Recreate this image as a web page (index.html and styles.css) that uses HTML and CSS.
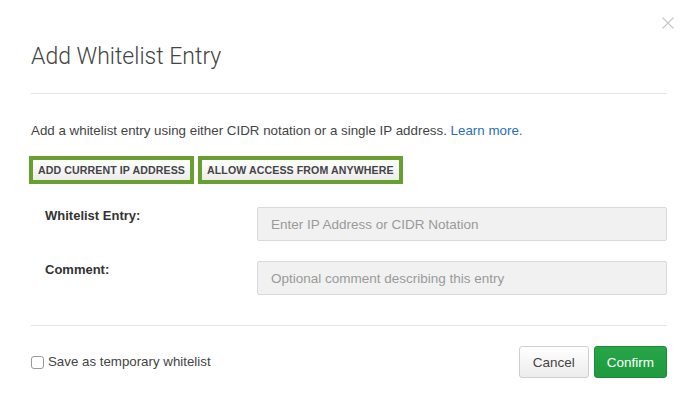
FILE: index.html
```html
<!DOCTYPE html>
<html>
<head>
<meta charset="utf-8">
<link rel="stylesheet" href="styles.css">
</head>
<body>
<div class="modal">
  <button class="close" aria-label="Close">
    <svg width="12" height="12" viewBox="0 0 12 12"><path d="M0.5 0.5 L11.5 11.5 M11.5 0.5 L0.5 11.5" stroke="#c8c8c8" stroke-width="1.2" fill="none"/></svg>
  </button>
  <div class="header">
    <h1 class="title">Add Whitelist Entry</h1>
  </div>
  <div class="body">
    <p class="desc">Add a whitelist entry using either CIDR notation or a single IP address. <a href="#" class="link">Learn more.</a></p>
    <div class="quick">
      <div class="hl"><button class="btn-sm">ADD CURRENT IP ADDRESS</button></div>
      <div class="hl"><button class="btn-sm">ALLOW ACCESS FROM ANYWHERE</button></div>
    </div>
    <div class="form">
      <div class="row">
        <label class="label">Whitelist Entry:</label>
        <input class="input" placeholder="Enter IP Address or CIDR Notation">
      </div>
      <div class="row">
        <label class="label">Comment:</label>
        <input class="input" placeholder="Optional comment describing this entry">
      </div>
    </div>
  </div>
  <div class="footer">
    <label class="check"><span class="box"></span>Save as temporary whitelist</label>
    <div class="actions">
      <button class="btn btn-default">Cancel</button>
      <button class="btn btn-primary">Confirm</button>
    </div>
  </div>
</div>
</body>
</html>
```
FILE: styles.css
```css
html, body {
  margin: 0;
  padding: 0;
  background: #fff;
}
body {
  font-family: "Liberation Sans", Arial, sans-serif;
  color: #444;
  font-size: 13px;
}
.modal {
  position: relative;
  width: 698px;
  height: 408px;
  box-sizing: border-box;
  padding: 0 31px;
  display: flex;
  flex-direction: column;
}
.close {
  position: absolute;
  top: 17px;
  right: 24px;
  width: 12px;
  height: 12px;
  padding: 0;
  border: 0;
  background: none;
  display: flex;
}
.header {
  padding-top: 42px;
  padding-bottom: 22px;
  border-bottom: 1px solid #e6e6e6;
}
.title {
  margin: 0;
  font-family: Roboto, "Liberation Sans", sans-serif;
  font-size: 23px;
  line-height: 29px;
  font-weight: 300;
  color: #444;
}
.body {
  padding-top: 28px;
  padding-bottom: 30px;
  border-bottom: 1px solid #e6e6e6;
}
.desc {
  margin: 0;
  font-size: 13.35px;
  line-height: 18px;
  color: #444;
}
.link {
  color: #2a6ebb;
  text-decoration: none;
}
.quick {
  display: flex;
  gap: 4px;
  margin-top: 16px;
  margin-left: -2px;
}
.hl {
  background: #68a030;
  padding: 4px;
  display: flex;
}
.btn-sm {
  font-family: "Liberation Sans", Arial, sans-serif;
  font-size: 10.6px;
  font-weight: bold;
  color: #444;
  height: 20px;
  padding: 0 5px;
  border: 0;
  background: linear-gradient(#ffffff, #ececec);
  letter-spacing: 0.1px;
}
.form {
  margin-top: 23px;
  display: flex;
  flex-direction: column;
  gap: 20px;
}
.row {
  display: flex;
  align-items: flex-start;
}
.label {
  width: 212px;
  padding-left: 14px;
  font-weight: bold;
  line-height: 18px;
  color: #333;
}
.input {
  flex: 1;
  height: 34px;
  box-sizing: border-box;
  border: 1px solid #d9d9d9;
  background: #f1f1f1;
  border-radius: 2px;
  padding: 0 13px;
  font-family: "Liberation Sans", Arial, sans-serif;
  font-size: 13.5px;
  color: #444;
}
.input::placeholder {
  color: #9a9a9a;
}
.footer {
  display: flex;
  align-items: center;
  justify-content: space-between;
  padding-top: 20px;
}
.check {
  display: flex;
  align-items: center;
  gap: 4px;
  font-size: 13.3px;
  color: #444;
  line-height: 18px;
}
.box {
  width: 11px;
  height: 11px;
  border: 1px solid #999;
  border-radius: 3px;
  background: #fff;
}
.actions {
  display: flex;
  gap: 5px;
}
.btn {
  height: 32px;
  font-family: "Liberation Sans", Arial, sans-serif;
  font-size: 13.5px;
  border-radius: 3px;
  padding: 0 12px;
}
.btn-default {
  padding: 0 13px;
  background: linear-gradient(#ffffff, #ececec);
  border: 1px solid #cfcfcf;
  color: #444;
}
.btn-primary {
  background: linear-gradient(#27a547, #1f9a3e);
  border: 1px solid #1d8a39;
  color: #fff;
}
```
